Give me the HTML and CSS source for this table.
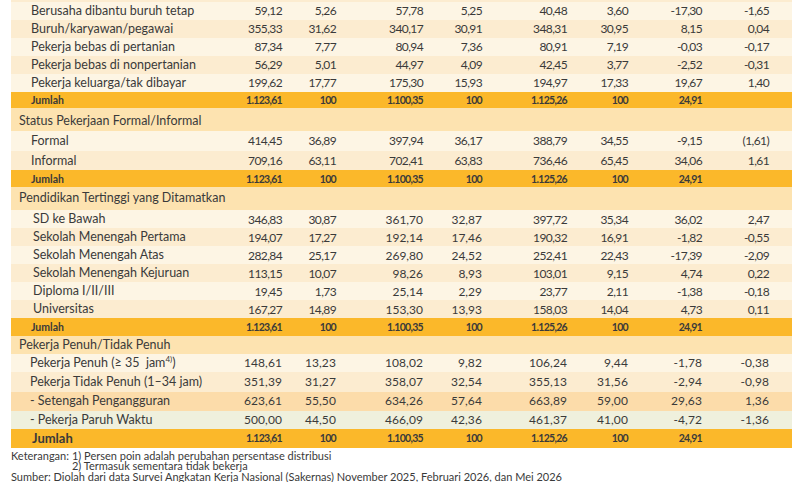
FILE: index.html
```html
<!DOCTYPE html>
<html lang="id">
  <head>
    <meta charset="UTF-8" />
    <meta name="viewport" content="width=device-width, initial-scale=1.0" />
    <title>Status Pekerjaan</title>
    <link rel="stylesheet" href="styles.css">
  </head>
  <body>
    <table class="tabel">
      <colgroup>
        <col class="c-label">
        <col class="c-a"><col class="c-b">
        <col class="c-c"><col class="c-d">
        <col class="c-e"><col class="c-f">
        <col class="c-g"><col class="c-h">
      </colgroup>
      <tbody>
        <tr class="baris gelap potong"><td class="label">Berusaha dibantu buruh tidak<br>tetap</td><td></td><td></td><td></td><td></td><td></td><td></td><td></td><td></td></tr>
        <tr class="baris terang"><td class="label">Berusaha dibantu buruh tetap</td><td>59,12</td><td>5,26</td><td>57,78</td><td>5,25</td><td>40,48</td><td>3,60</td><td>-17,30</td><td>-1,65</td></tr>
        <tr class="baris gelap"><td class="label">Buruh/karyawan/pegawai</td><td>355,33</td><td>31,62</td><td>340,17</td><td>30,91</td><td>348,31</td><td>30,95</td><td>8,15</td><td>0,04</td></tr>
        <tr class="baris terang"><td class="label">Pekerja bebas di pertanian</td><td>87,34</td><td>7,77</td><td>80,94</td><td>7,36</td><td>80,91</td><td>7,19</td><td>-0,03</td><td>-0,17</td></tr>
        <tr class="baris gelap"><td class="label">Pekerja bebas di nonpertanian</td><td>56,29</td><td>5,01</td><td>44,97</td><td>4,09</td><td>42,45</td><td>3,77</td><td>-2,52</td><td>-0,31</td></tr>
        <tr class="baris terang"><td class="label">Pekerja keluarga/tak dibayar</td><td>199,62</td><td>17,77</td><td>175,30</td><td>15,93</td><td>194,97</td><td>17,33</td><td>19,67</td><td>1,40</td></tr>
        <tr class="jumlah"><td class="label">Jumlah</td><td>1.123,61</td><td>100</td><td>1.100,35</td><td>100</td><td>1.125,26</td><td>100</td><td>24,91</td><td></td></tr>

        <tr class="judul turun"><td class="label" colspan="9">Status Pekerjaan Formal/Informal</td></tr>
        <tr class="baris terang tinggi"><td class="label">Formal</td><td>414,45</td><td>36,89</td><td>397,94</td><td>36,17</td><td>388,79</td><td>34,55</td><td>-9,15</td><td>(1,61)</td></tr>
        <tr class="baris gelap tinggi"><td class="label">Informal</td><td>709,16</td><td>63,11</td><td>702,41</td><td>63,83</td><td>736,46</td><td>65,45</td><td>34,06</td><td>1,61</td></tr>
        <tr class="jumlah j2"><td class="label">Jumlah</td><td>1.123,61</td><td>100</td><td>1.100,35</td><td>100</td><td>1.125,26</td><td>100</td><td>24,91</td><td></td></tr>

        <tr class="judul"><td class="label" colspan="9">Pendidikan Tertinggi yang Ditamatkan</td></tr>
        <tr class="baris terang didik"><td class="label">SD ke Bawah</td><td>346,83</td><td>30,87</td><td class="lebar">361,70</td><td class="lebar">32,87</td><td>397,72</td><td>35,34</td><td>36,02</td><td>2,47</td></tr>
        <tr class="baris gelap didik"><td class="label">Sekolah Menengah Pertama</td><td>194,07</td><td>17,27</td><td class="lebar">192,14</td><td class="lebar">17,46</td><td>190,32</td><td>16,91</td><td>-1,82</td><td>-0,55</td></tr>
        <tr class="baris terang didik"><td class="label">Sekolah Menengah Atas</td><td>282,84</td><td>25,17</td><td class="lebar">269,80</td><td class="lebar">24,52</td><td>252,41</td><td>22,43</td><td>-17,39</td><td>-2,09</td></tr>
        <tr class="baris gelap didik"><td class="label">Sekolah Menengah Kejuruan</td><td>113,15</td><td>10,07</td><td class="lebar">98,26</td><td class="lebar">8,93</td><td>103,01</td><td>9,15</td><td>4,74</td><td>0,22</td></tr>
        <tr class="baris terang didik"><td class="label">Diploma I/II/III</td><td>19,45</td><td>1,73</td><td class="lebar">25,14</td><td class="lebar">2,29</td><td>23,77</td><td>2,11</td><td>-1,38</td><td>-0,18</td></tr>
        <tr class="baris gelap didik"><td class="label">Universitas</td><td>167,27</td><td>14,89</td><td class="lebar">153,30</td><td class="lebar">13,93</td><td>158,03</td><td>14,04</td><td>4,73</td><td>0,11</td></tr>
        <tr class="jumlah j3"><td class="label">Jumlah</td><td>1.123,61</td><td>100</td><td>1.100,35</td><td>100</td><td>1.125,26</td><td>100</td><td>24,91</td><td></td></tr>

        <tr class="judul pendek"><td class="label" colspan="9">Pekerja Penuh/Tidak Penuh</td></tr>
        <tr class="baris terang jam"><td class="label">Pekerja Penuh (≥ 35&nbsp; jam<sup>4)</sup>)</td><td>148,61</td><td>13,23</td><td>108,02</td><td>9,82</td><td>106,24</td><td>9,44</td><td>-1,78</td><td>-0,38</td></tr>
        <tr class="baris gelap jam tidak"><td class="label">Pekerja Tidak Penuh (1–34 jam)</td><td>351,39</td><td>31,27</td><td>358,07</td><td>32,54</td><td>355,13</td><td>31,56</td><td>-2,94</td><td>-0,98</td></tr>
        <tr class="baris oranye jam"><td class="label">- Setengah Pengangguran</td><td>623,61</td><td>55,50</td><td>634,26</td><td>57,64</td><td>663,89</td><td>59,00</td><td>29,63</td><td>1,36</td></tr>
        <tr class="baris hijau jam"><td class="label">- Pekerja Paruh Waktu</td><td>500,00</td><td>44,50</td><td>466,09</td><td>42,36</td><td>461,37</td><td>41,00</td><td>-4,72</td><td>-1,36</td></tr>
        <tr class="jumlah akhir"><td class="label">Jumlah</td><td>1.123,61</td><td>100</td><td>1.100,35</td><td>100</td><td>1.125,26</td><td>100</td><td>24,91</td><td></td></tr>
      </tbody>
    </table>

    <div class="catatan">
      <div class="ket">
        <span>Keterangan:</span>
        <div>
          <p>1) Persen poin adalah perubahan persentase distribusi</p>
          <p>2) Termasuk sementara tidak bekerja</p>
        </div>
      </div>
      <p class="sumber">Sumber: Diolah dari data Survei Angkatan Kerja Nasional (Sakernas) November 2025, Februari 2026, dan Mei 2026</p>
    </div>
  </body>
</html>
```

FILE: styles.css
```css
body {
  margin: 0;
  background: #fff;
  font-family: Lato, "Noto Sans", sans-serif;
  color: #3a3a3a;
}

/* tabel utama, mulai dari x = 11 */
.tabel {
  margin: -34px 0 0 11px;
  width: 781px;
  table-layout: fixed;
  border-collapse: collapse;
  border-spacing: 0;
}

.c-label { width: 219px; }
.c-a { width: 52px; }
.c-b { width: 54px; }
.c-c { width: 87px; }
.c-d { width: 59px; }
.c-e { width: 85px; }
.c-f { width: 61px; }
.c-g { width: 74px; }
.c-h { width: 90px; }

.tabel td {
  padding: 0;
  text-align: right;
  white-space: nowrap;
  font-size: 12px;
  letter-spacing: -0.6px;
  vertical-align: middle;
  line-height: 1;
}

.tabel td:last-child {
  padding-right: 23px;
}

.tabel td.label {
  text-align: left;
  padding-left: 20px;
  font-size: 12.5px;
  letter-spacing: 0;
}

.baris td { height: 18px; }
.potong td { height: 36px; line-height: 16px; }
.tinggi td { height: 18.5px; padding-top: 1px; }
.jam td { height: 18.5px; letter-spacing: 0.1px; }
.tidak td { height: 20px; }
.didik td { height: 17px; padding-top: 1px; }
.didik td.label { padding-left: 22px; }
.jam td.label { padding-left: 19px; }
.didik td.lebar { letter-spacing: 0; }

.terang { background: #fdf5e4; }
.gelap { background: #fcecd0; }
.oranye { background: #fcdcaa; }
.hijau { background: #eff0dd; }

.judul { background: #fde3b0; }
.judul td { height: 23px; }
.judul td.label { padding-left: 8px; }
.turun td { height: 20px; padding-top: 3px; }
.pendek td { height: 17.5px; }

.jumlah { background: #fbb82a; }
.jumlah td {
  height: 16px;
  font-size: 10.5px;
  font-weight: 700;
  letter-spacing: -0.7px;
}
.jumlah td.label {
  font-size: 10.5px;
  letter-spacing: 0;
}
.j2 td { height: 16px; padding-top: 1px; }
.j3 td { height: 18px; }
.akhir td { height: 18.5px; }
.akhir td.label {
  font-size: 13px;
  padding-left: 21px;
}

sup {
  font-size: 8px;
  vertical-align: 5px;
  line-height: 0;
}

/* catatan kaki */
.catatan {
  margin: 3px 0 0 11px;
  font-size: 11px;
  line-height: 10px;
}

.catatan p {
  margin: 0;
}

.catatan .sumber {
  margin-top: 1px;
}

.ket {
  display: flex;
  gap: 3px;
}
```
